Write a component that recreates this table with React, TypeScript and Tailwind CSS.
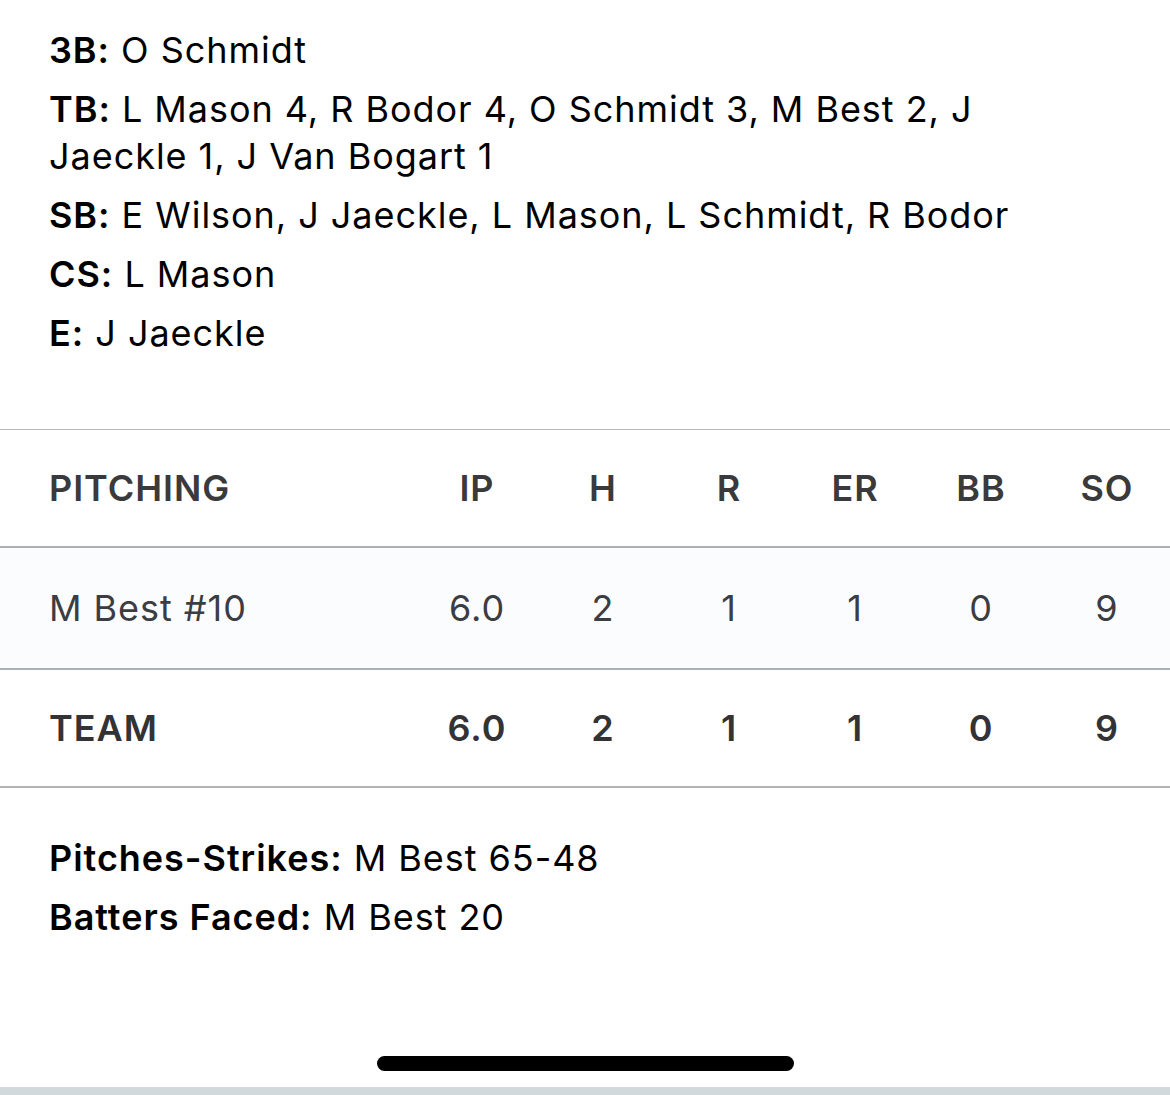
const notes = [
  { label: "3B:", value: "O Schmidt" },
  {
    label: "TB:",
    value: "L Mason 4, R Bodor 4, O Schmidt 3, M Best 2, J Jaeckle 1, J Van Bogart 1",
  },
  { label: "SB:", value: "E Wilson, J Jaeckle, L Mason, L Schmidt, R Bodor" },
  { label: "CS:", value: "L Mason" },
  { label: "E:", value: "J Jaeckle" },
];

const cols = ["IP", "H", "R", "ER", "BB", "SO"];
const pitchers = [{ name: "M Best #10", stats: ["6.0", "2", "1", "1", "0", "9"] }];
const team = ["6.0", "2", "1", "1", "0", "9"];

export default function App() {
  return (
    <div
      className="w-[1170px] h-[1095px] bg-white flex flex-col overflow-hidden tracking-[0.06em]"
      style={{ fontFamily: "Inter, 'Noto Sans', sans-serif" }}
    >
      {/* game notes */}
      <div className="pl-[49px] pr-[130px] pt-[27px] flex flex-col gap-3 text-[36px] leading-[47px] text-black">
        {notes.map((n) => (
          <p key={n.label}>
            <span className="font-semibold">{n.label}</span> {n.value}
          </p>
        ))}
      </div>

      {/* pitching table */}
      <div className="mt-[72px] border-t border-[#b8b8b8]">
        <div className="flex items-center h-[116px] text-[36px] font-semibold text-[#3a3a3c]">
          <div className="flex-1 pl-[49px]">PITCHING</div>
          {cols.map((c) => (
            <div key={c} className="w-[126px] text-center">
              {c}
            </div>
          ))}
        </div>
        {pitchers.map((p) => (
          <div
            key={p.name}
            className="flex items-center h-[124px] border-y-[2px] border-[#aab0b6] bg-[#fbfcfd] text-[36px] text-[#3c3c43]"
          >
            <div className="flex-1 pl-[49px]">{p.name}</div>
            {p.stats.map((s, i) => (
              <div key={i} className="w-[126px] text-center">
                {s}
              </div>
            ))}
          </div>
        ))}
        <div className="flex items-center h-[118px] border-b-[2px] border-[#b4b4b4] text-[36px] font-semibold text-[#333336]">
          <div className="flex-1 pl-[49px]">TEAM</div>
          {team.map((s, i) => (
            <div key={i} className="w-[126px] text-center">
              {s}
            </div>
          ))}
        </div>
      </div>

      {/* pitching notes */}
      <div className="pl-[49px] pt-[47px] flex flex-col gap-3 text-[36px] leading-[47px] text-black">
        <p>
          <span className="font-semibold">Pitches-Strikes:</span> M Best 65-48
        </p>
        <p>
          <span className="font-semibold">Batters Faced:</span> M Best 20
        </p>
      </div>

      <div className="flex-1" />
      <div className="flex justify-center pb-[16px]">
        <div className="w-[417px] h-[15px] rounded-full bg-black ml-[1px]" />
      </div>
      <div className="h-[8px] bg-[#d2d9dd]" />
    </div>
  );
}
